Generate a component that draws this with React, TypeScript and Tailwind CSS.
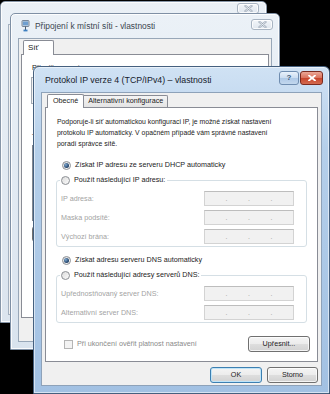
import React from "react";

function XIcon({ color, w = 8, h = 6, stroke = 1.4 }: { color: string; w?: number; h?: number; stroke?: number }) {
  return (
    <svg width={w} height={h} viewBox="0 0 8 6">
      <path d="M1 0.5 L7 5.5 M7 0.5 L1 5.5" stroke={color} strokeWidth={stroke} strokeLinecap="round" />
    </svg>
  );
}

function InactiveClose() {
  return (
    <div className="w-[22px] h-[11px] rounded-[3px] border border-[#a8b4c2] bg-gradient-to-b from-[#f3f6fa] to-[#dfe6ee] flex items-center justify-center shadow-[inset_0_0_0_1px_rgba(255,255,255,0.8)]">
      <svg width="9" height="7" viewBox="0 0 9 7">
        <path d="M1.5 1 L7.5 6 M7.5 1 L1.5 6" stroke="#9aa6b4" strokeWidth="2.2" strokeLinecap="round" />
        <path d="M1.5 1 L7.5 6 M7.5 1 L1.5 6" stroke="#eef2f6" strokeWidth="0.9" strokeLinecap="round" />
      </svg>
    </div>
  );
}

function NetIcon() {
  return (
    <svg width="9" height="12" viewBox="0 0 9 12" className="shrink-0">
      <rect x="1" y="0.5" width="7" height="6" rx="0.8" fill="#c7d3df" stroke="#5d6f84" strokeWidth="0.8" />
      <rect x="2" y="1.5" width="5" height="3.8" fill="#6f9fd0" />
      <path d="M4.5 6.5 V10" stroke="#4d5d70" strokeWidth="1" />
      <rect x="2.5" y="9.6" width="4" height="1.8" fill="#3d7fc0" />
    </svg>
  );
}

function Radio({ checked }: { checked?: boolean }) {
  return (
    <span className="w-[9px] h-[9px] rounded-full border border-[#8c8f94] bg-gradient-to-br from-[#dcdcdc] to-[#fbfbfb] flex items-center justify-center shrink-0">
      {checked && <span className="w-[5px] h-[5px] rounded-full bg-[radial-gradient(circle_at_35%_35%,#7fa9d0,#1f3f66_70%)]" />}
    </span>
  );
}

function IpBox() {
  return (
    <div className="w-[90px] h-[15px] border border-[#d3d3d3] border-t-[#bdbdbd] bg-[#f1f1f1] flex items-center text-[#9b9b9b] text-[7px] leading-none">
      <span className="flex-1" />
      <span>.</span>
      <span className="flex-1" />
      <span>.</span>
      <span className="flex-1" />
      <span>.</span>
      <span className="flex-1" />
    </div>
  );
}

function Btn({ children, w, def }: { children?: React.ReactNode; w: string; def?: boolean }) {
  return (
    <div
      className={`${w} h-[16px] rounded-[3px] border ${
        def
          ? "border-[#3c7fb1] shadow-[inset_0_0_0_1px_#bfe4f8]"
          : "border-[#707070] shadow-[inset_0_0_0_1px_rgba(255,255,255,0.75)]"
      } bg-[linear-gradient(to_bottom,#f4f4f4_0%,#ececec_50%,#dedede_50%,#d2d2d2_100%)] flex items-center justify-center text-[7.2px] text-[#1b1b1b]`}
    >
      {children}
    </div>
  );
}

function Row({ label }: { label: string }) {
  return (
    <div className="h-[15px] flex items-center justify-between pl-[1px] pr-[12px]">
      <span className="text-[#a3a3a3] leading-[9px]">{label}</span>
      <IpBox />
    </div>
  );
}

function WindowA() {
  return (
    <div className="absolute left-0 top-[1px] w-[267px] h-[322px] rounded-t-[5px] border border-[#8796a8] bg-gradient-to-b from-[#eaf0f6] to-[#dbe4ee] shadow-[inset_0_0_0_1px_rgba(255,255,255,0.85)] flex flex-col px-[7px] pb-[7px]">
      <div className="h-[22px] flex justify-end items-start pt-[1px]">
        <InactiveClose />
      </div>
      <div className="flex-1 border border-[#a3b0bf] bg-[#f0f0f0]" />
    </div>
  );
}

function WindowB() {
  return (
    <div className="absolute left-[10px] top-[13px] w-[270px] h-[337px] rounded-t-[5px] border border-[#7f90a5] bg-gradient-to-b from-[#ebf1f7] to-[#d9e3ee] shadow-[inset_0_0_0_1px_rgba(255,255,255,0.85)] flex flex-col px-[7px] pb-[7px]">
      <div className="h-[24px] flex items-center gap-[5px] pl-[3px]">
        <NetIcon />
        <span className="text-[8.4px] text-[#3c4650] whitespace-nowrap">Připojení k místní síti - vlastnosti</span>
        <div className="ml-auto self-start mt-[5px] -mr-[1px]">
          <InactiveClose />
        </div>
      </div>
      <div className="flex-1 border border-[#98a7b8] bg-[#f0f0f0] flex flex-col px-[2px] pt-[1px]">
        <div className="flex pl-[2px]">
          <div className="w-[31px] h-[15px] -mb-px relative z-10 bg-white border border-[#898c95] border-b-0 rounded-t-[2px] flex items-center pl-[4px] text-[8px] text-[#1b1b1b]">
            Síť
          </div>
        </div>
        <div className="h-[264px] bg-white border border-[#898c95] flex flex-col pl-[10px] pt-[8px] text-[7.2px] text-[#1b1b1b]">
          <span className="whitespace-nowrap">Připojit pomocí:</span>
          <div className="mt-[3px] h-[27px] w-[200px] -ml-px border border-[#a5acb5] bg-[#f4f4f4]" />
          <span className="mt-[28px] h-[9px]">T</span>
          <div className="mt-[4px] h-[76px] w-[220px] border border-[#828790] bg-white" />
          <div className="mt-[5px] flex gap-[6px]">
            <Btn w="w-[60px]" />
            <Btn w="w-[60px]" />
          </div>
        </div>
      </div>
    </div>
  );
}

function DialogC() {
  return (
    <div className="absolute left-[33px] top-[66px] w-[297px] h-[328px] rounded-t-[6px] border border-[#45607f] bg-[linear-gradient(to_bottom,#d0e2f4_0%,#b5cfea_25%,#a2c1e3_100%)] shadow-[inset_0_0_0_1px_rgba(255,255,255,0.55)] flex flex-col px-[7px] pb-[7px]">
      <div className="h-[25px] flex items-center pl-[4px] pt-[2px]">
        <span className="text-[8.8px] text-[#16202c] whitespace-nowrap">Protokol IP verze 4 (TCP/IPv4) – vlastnosti</span>
        <div className="ml-auto self-start mt-[2px] -mr-[1px] flex gap-[1px]">
          <div className="w-[20px] h-[14px] rounded-[3px] border border-[#6f8db0] bg-[linear-gradient(to_bottom,#e9f2fb_0%,#cadcf0_50%,#adc8e6_50%,#c3d8ee_100%)] flex items-center justify-center text-[8px] font-bold text-[#3d5878] leading-none">
            ?
          </div>
          <div className="w-[23px] h-[14px] rounded-[3px] border border-[#7b2a1f] bg-[linear-gradient(to_bottom,#eba897_0%,#d9705b_50%,#c7432b_50%,#d36a4f_100%)] flex items-center justify-center">
            <XIcon color="#ffffff" stroke={1.8} />
          </div>
        </div>
      </div>
      <div className="flex-1 border border-[#8ea2b9] bg-[#f0f0f0] flex flex-col px-[3px] pt-[1px] text-[7.2px] text-[#1b1b1b]">
        <div className="flex items-end pl-[2px]">
          <div className="h-[14px] -mb-px relative z-10 bg-white border border-[#898c95] border-b-0 rounded-t-[2px] flex items-center px-[5px]">
            Obecné
          </div>
          <div className="h-[12px] border border-[#898c95] border-l-0 border-b-0 rounded-tr-[2px] bg-gradient-to-b from-[#f4f4f4] to-[#e4e4e4] flex items-center px-[4px]">
            Alternativní konfigurace
          </div>
        </div>
        <div className="h-[255px] bg-white border border-[#898c95] flex flex-col">
          <div className="pt-[8px] pl-[11px] text-[6.85px] leading-[11px] whitespace-nowrap">
            <div className="h-[11px]">Podporuje-li síť automatickou konfiguraci IP, je možné získat nastavení</div>
            <div className="h-[11px]">protokolu IP automaticky. V opačném případě vám správné nastavení</div>
            <div className="h-[11px]">poradí správce sítě.</div>
          </div>

          <div className="mt-[11px] ml-[16px] h-[10px] flex items-center gap-[4px]">
            <Radio checked />
            <span>Získat IP adresu ze serveru DHCP automaticky</span>
          </div>

          <fieldset className="mt-[5px] mx-[10px] border border-[#d5dfe5] rounded-[3px] pl-[3px] pt-[6px] pb-[2px] flex flex-col gap-[4px]">
            <legend className="px-[1px]">
              <span className="h-[10px] flex items-center gap-[4px] pr-[1px]">
                <Radio />
                <span>Použít následující IP adresu:</span>
              </span>
            </legend>
            <Row label="IP adresa:" />
            <Row label="Maska podsítě:" />
            <Row label="Výchozí brána:" />
          </fieldset>

          <div className="mt-[8px] ml-[16px] h-[10px] flex items-center gap-[4px]">
            <Radio checked />
            <span>Získat adresu serveru DNS automaticky</span>
          </div>

          <fieldset className="mt-[5px] mx-[10px] border border-[#d5dfe5] rounded-[3px] pl-[3px] pt-[6px] pb-[2px] flex flex-col gap-[4px]">
            <legend className="px-[1px]">
              <span className="h-[10px] flex items-center gap-[4px] pr-[1px]">
                <Radio />
                <span>Použít následující adresy serverů DNS:</span>
              </span>
            </legend>
            <Row label="Upřednostňovaný server DNS:" />
            <Row label="Alternativní server DNS:" />
          </fieldset>

          <div className="mt-[13px] ml-[18px] mr-[7px] flex items-center">
            <span className="w-[9px] h-[9px] border border-[#b5b5b5] bg-[#f3f3f3] shrink-0" />
            <span className="ml-[4px] text-[#8a8a8a]">Při ukončení ověřit platnost nastavení</span>
            <div className="ml-auto">
              <Btn w="w-[62px]">Upřesnit...</Btn>
            </div>
          </div>
        </div>
        <div className="mt-[5px] flex justify-end gap-[5px]">
          <Btn w="w-[52px]" def>OK</Btn>
          <Btn w="w-[51px]">Storno</Btn>
        </div>
      </div>
    </div>
  );
}

export default function App() {
  return (
    <div className="relative w-[330px] h-[394px] overflow-hidden bg-black font-[Liberation_Sans,Arial,sans-serif] text-[#1b1b1b]">
      <WindowA />
      <WindowB />
      <DialogC />
    </div>
  );
}
